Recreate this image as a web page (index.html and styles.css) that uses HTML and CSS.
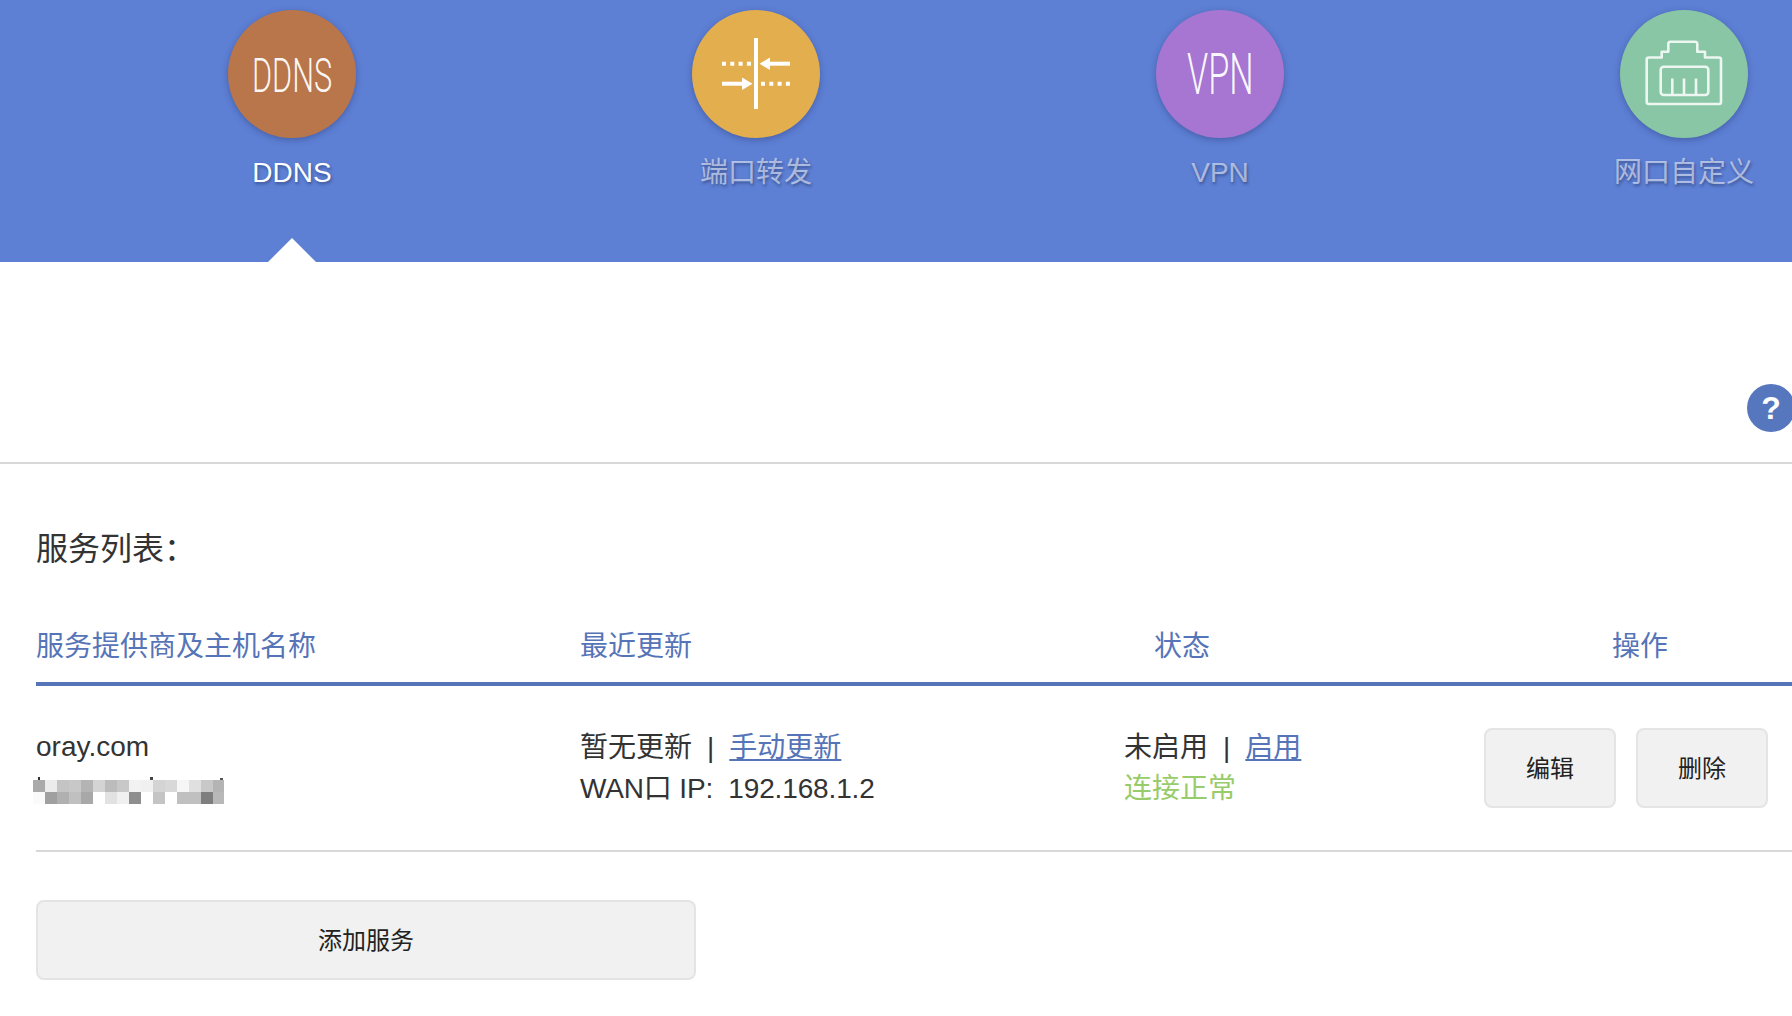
FILE: index.html
```html
<!DOCTYPE html>
<html lang="zh-CN">
<head>
<meta charset="utf-8">
<title>应用管理</title>
<link rel="stylesheet" href="styles.css">
</head>
<body>
<header class="tabs">
  <div class="tab is-active">
    <div class="disc disc-ddns"><span class="art-word art-ddns">DDNS</span></div>
    <div class="tab-label">DDNS</div>
    <i class="tab-caret"></i>
  </div>
  <div class="tab">
    <div class="disc disc-port">
      <svg viewBox="0 0 128 128" class="disc-art">
        <path class="w4" d="M64 28V99"/>
        <path class="w4 dots" d="M30 53.7H59"/>
        <path class="w4" d="M98 53.7H74"/>
        <path class="fill" d="M67.5 53.7L78 47.5V60Z"/>
        <path class="w4" d="M30 73.7H54"/>
        <path class="fill" d="M60.5 73.7L50 67.5V80Z"/>
        <path class="w4 dots" d="M69 73.7H98"/>
      </svg>
    </div>
    <div class="tab-label">端口转发</div>
  </div>
  <div class="tab">
    <div class="disc disc-vpn"><span class="art-word art-vpn">VPN</span></div>
    <div class="tab-label">VPN</div>
  </div>
  <div class="tab">
    <div class="disc disc-lan">
      <svg viewBox="0 0 128 128" class="disc-art">
        <path class="line" d="M29 47.5H41.7V41.7H48.3V34Q48.3 31.7 50.5 31.7H75Q77.3 31.7 77.3 34V41.7H85V47.5H99Q101 47.5 101 49.5V92Q101 94 99 94H29Q26.7 94 26.7 92V49.5Q26.7 47.5 29 47.5Z"/>
        <rect class="line" x="40.7" y="56.7" width="47.6" height="28.3" rx="3"/>
        <path class="line" d="M52.3 68.5V84M64 68.5V84M76 68.5V84"/>
      </svg>
    </div>
    <div class="tab-label">网口自定义</div>
  </div>
</header>

<section class="notice">
  <a class="help">?</a>
</section>

<main class="content">
  <h2 class="title">服务列表：</h2>
  <div class="grid head">
    <div>服务提供商及主机名称</div>
    <div>最近更新</div>
    <div class="head-status">状态</div>
    <div class="head-actions">操作</div>
  </div>
  <div class="grid row">
    <div class="host">
      <div>oray.com</div>
      <svg class="mosaic" width="191" height="27" viewBox="0 0 191 27" shape-rendering="crispEdges">
        <rect x="5" y="0" width="2" height="3" fill="#333"/><rect x="117" y="0" width="3" height="3" fill="#444"/><rect x="187" y="1" width="3" height="2" fill="#555"/>
        <rect x="0" y="3" width="12" height="12" fill="#aaaaaa"/><rect x="12" y="3" width="12" height="12" fill="#ececec"/><rect x="24" y="3" width="12" height="12" fill="#c4c4c4"/><rect x="36" y="3" width="12" height="12" fill="#c8c8c8"/><rect x="48" y="3" width="12" height="12" fill="#b4b4b4"/><rect x="60" y="3" width="12" height="12" fill="#d4d4d4"/><rect x="72" y="3" width="12" height="12" fill="#bcbcbc"/><rect x="84" y="3" width="12" height="12" fill="#c8c8c8"/><rect x="96" y="3" width="12" height="12" fill="#f2f2f2"/><rect x="108" y="3" width="12" height="12" fill="#f0f0f0"/><rect x="120" y="3" width="12" height="12" fill="#d4d4d4"/><rect x="132" y="3" width="12" height="12" fill="#d8d8d8"/><rect x="144" y="3" width="12" height="12" fill="#f6f6f6"/><rect x="156" y="3" width="12" height="12" fill="#e0e0e0"/><rect x="168" y="3" width="12" height="12" fill="#c8c8c8"/><rect x="180" y="3" width="11" height="12" fill="#b4b4b4"/>
        <rect x="0" y="15" width="12" height="12" fill="#fafafa"/><rect x="12" y="15" width="12" height="12" fill="#a0a0a0"/><rect x="24" y="15" width="12" height="12" fill="#b0b0b0"/><rect x="36" y="15" width="12" height="12" fill="#c0c0c0"/><rect x="48" y="15" width="12" height="12" fill="#a8a8a8"/><rect x="60" y="15" width="12" height="12" fill="#ffffff"/><rect x="72" y="15" width="12" height="12" fill="#e2e2e2"/><rect x="84" y="15" width="12" height="12" fill="#f0f0f0"/><rect x="96" y="15" width="12" height="12" fill="#8e8e8e"/><rect x="108" y="15" width="12" height="12" fill="#ffffff"/><rect x="120" y="15" width="12" height="12" fill="#c4c4c4"/><rect x="132" y="15" width="12" height="12" fill="#ffffff"/><rect x="144" y="15" width="12" height="12" fill="#c0c0c0"/><rect x="156" y="15" width="12" height="12" fill="#c0c0c0"/><rect x="168" y="15" width="12" height="12" fill="#7e7e7e"/><rect x="180" y="15" width="11" height="12" fill="#b8b8b8"/>
      </svg>
    </div>
    <div>
      <div>暂无更新<span class="sep">|</span><a class="link">手动更新</a></div>
      <div class="wan">WAN口 IP:&nbsp;&nbsp;192.168.1.2</div>
    </div>
    <div>
      <div>未启用<span class="sep">|</span><a class="link">启用</a></div>
      <div class="ok">连接正常</div>
    </div>
    <div class="actions">
      <button class="btn btn-small">编辑</button>
      <button class="btn btn-small">删除</button>
    </div>
  </div>
  <button class="btn btn-wide">添加服务</button>
</main>
</body>
</html>
```
FILE: styles.css
```css
* { box-sizing: border-box; }
html, body { margin: 0; padding: 0; background: #fff; overflow: hidden; }
body {
  width: 1792px;
  height: 1016px;
  position: relative;
  font-family: "Liberation Sans", "Noto Sans CJK SC", sans-serif;
  font-size: 28px;
  color: #333;
}

/* top icon tabs */
.tabs {
  height: 262px;
  background: #5d7fd4;
  display: flex;
  padding-left: 60px;
  overflow: hidden;
}
.tab {
  flex: none;
  width: 464px;
  position: relative;
  display: flex;
  flex-direction: column;
  align-items: center;
  padding-top: 10px;
}
.disc {
  width: 128px;
  height: 128px;
  border-radius: 50%;
  box-shadow: 0 2px 6px rgba(30, 40, 90, .35);
  display: flex;
  align-items: center;
  justify-content: center;
}
.disc-art { display: block; width: 128px; height: 128px; }
.disc-ddns { background: #b9764a; }
.disc-port { background: #e3ae4e; }
.disc-vpn { background: #a676d2; }
.disc-lan { background: #88c6a5; }
.art-word {
  flex: none;
  font-family: Roboto, "Liberation Sans", sans-serif;
  font-weight: 300;
  line-height: 1;
  color: rgba(255, 255, 255, .95);
}
.art-ddns { font-size: 49px; padding-top: 2px; transform: scaleX(.627); }
.art-vpn { font-size: 58px; transform: scaleX(.59); }
.w4 { stroke: #fff; stroke-width: 4; fill: none; }
.dots { stroke-dasharray: 4 4.3; }
.fill { fill: #fff; }
.line {
  stroke: #fff;
  stroke-opacity: .85;
  stroke-width: 2.6;
  fill: none;
  stroke-linejoin: round;
}
.tab-label {
  margin-top: 15px;
  line-height: 40px;
  color: rgba(255, 255, 255, .55);
  text-shadow: 1px 2px 3px rgba(20, 30, 70, .45);
}
.is-active .tab-label { color: #fff; }
.tab-caret {
  position: absolute;
  left: 50%;
  bottom: 0;
  width: 48px;
  height: 24px;
  margin-left: -24px;
  background: #fff;
  clip-path: polygon(50% 0, 100% 100%, 0 100%);
}

/* empty band with help button */
.notice {
  height: 202px;
  border-bottom: 2px solid #d8d8d8;
}
.help {
  position: absolute;
  left: 1747px;
  top: 384px;
  width: 48px;
  height: 48px;
  border-radius: 50%;
  background: #5677bd;
  color: #fff;
  font-size: 32px;
  font-weight: 700;
  line-height: 48px;
  text-align: center;
}

/* service list */
.content { padding-left: 36px; }
.title {
  margin: 0;
  padding-top: 63px;
  font-size: 32px;
  font-weight: 400;
  line-height: 44px;
  color: #333;
}
.grid {
  display: grid;
  grid-template-columns: 544px 544px 360px 1fr;
}
.head {
  margin-top: 54px;
  height: 61px;
  padding-top: 2px;
  line-height: 40px;
  color: #5674b8;
  border-bottom: 4px solid #5674b8;
}
.head-status { padding-left: 30px; }
.head-actions { padding-left: 128px; }
.row {
  height: 166px;
  align-items: center;
  line-height: 41px;
  border-bottom: 2px solid #d8d8d8;
}
.host { padding-bottom: 7px; }
.mosaic { display: block; margin: 10px 0 0 -3px; }
.sep { margin: 0 15px; }
.wan { letter-spacing: -.15px; }
.link { color: #5674b8; text-decoration: underline; }
.ok { color: #98cb6a; }
.actions { display: flex; gap: 20px; }
.btn {
  height: 80px;
  background: #f1f1f1;
  border: 2px solid #e4e4e4;
  border-radius: 8px;
  font-family: inherit;
  font-size: 24px;
  color: #222;
  padding: 0 0 4px;
}
.btn-small { width: 132px; }
.btn-wide { display: block; width: 660px; margin-top: 48px; }
```
